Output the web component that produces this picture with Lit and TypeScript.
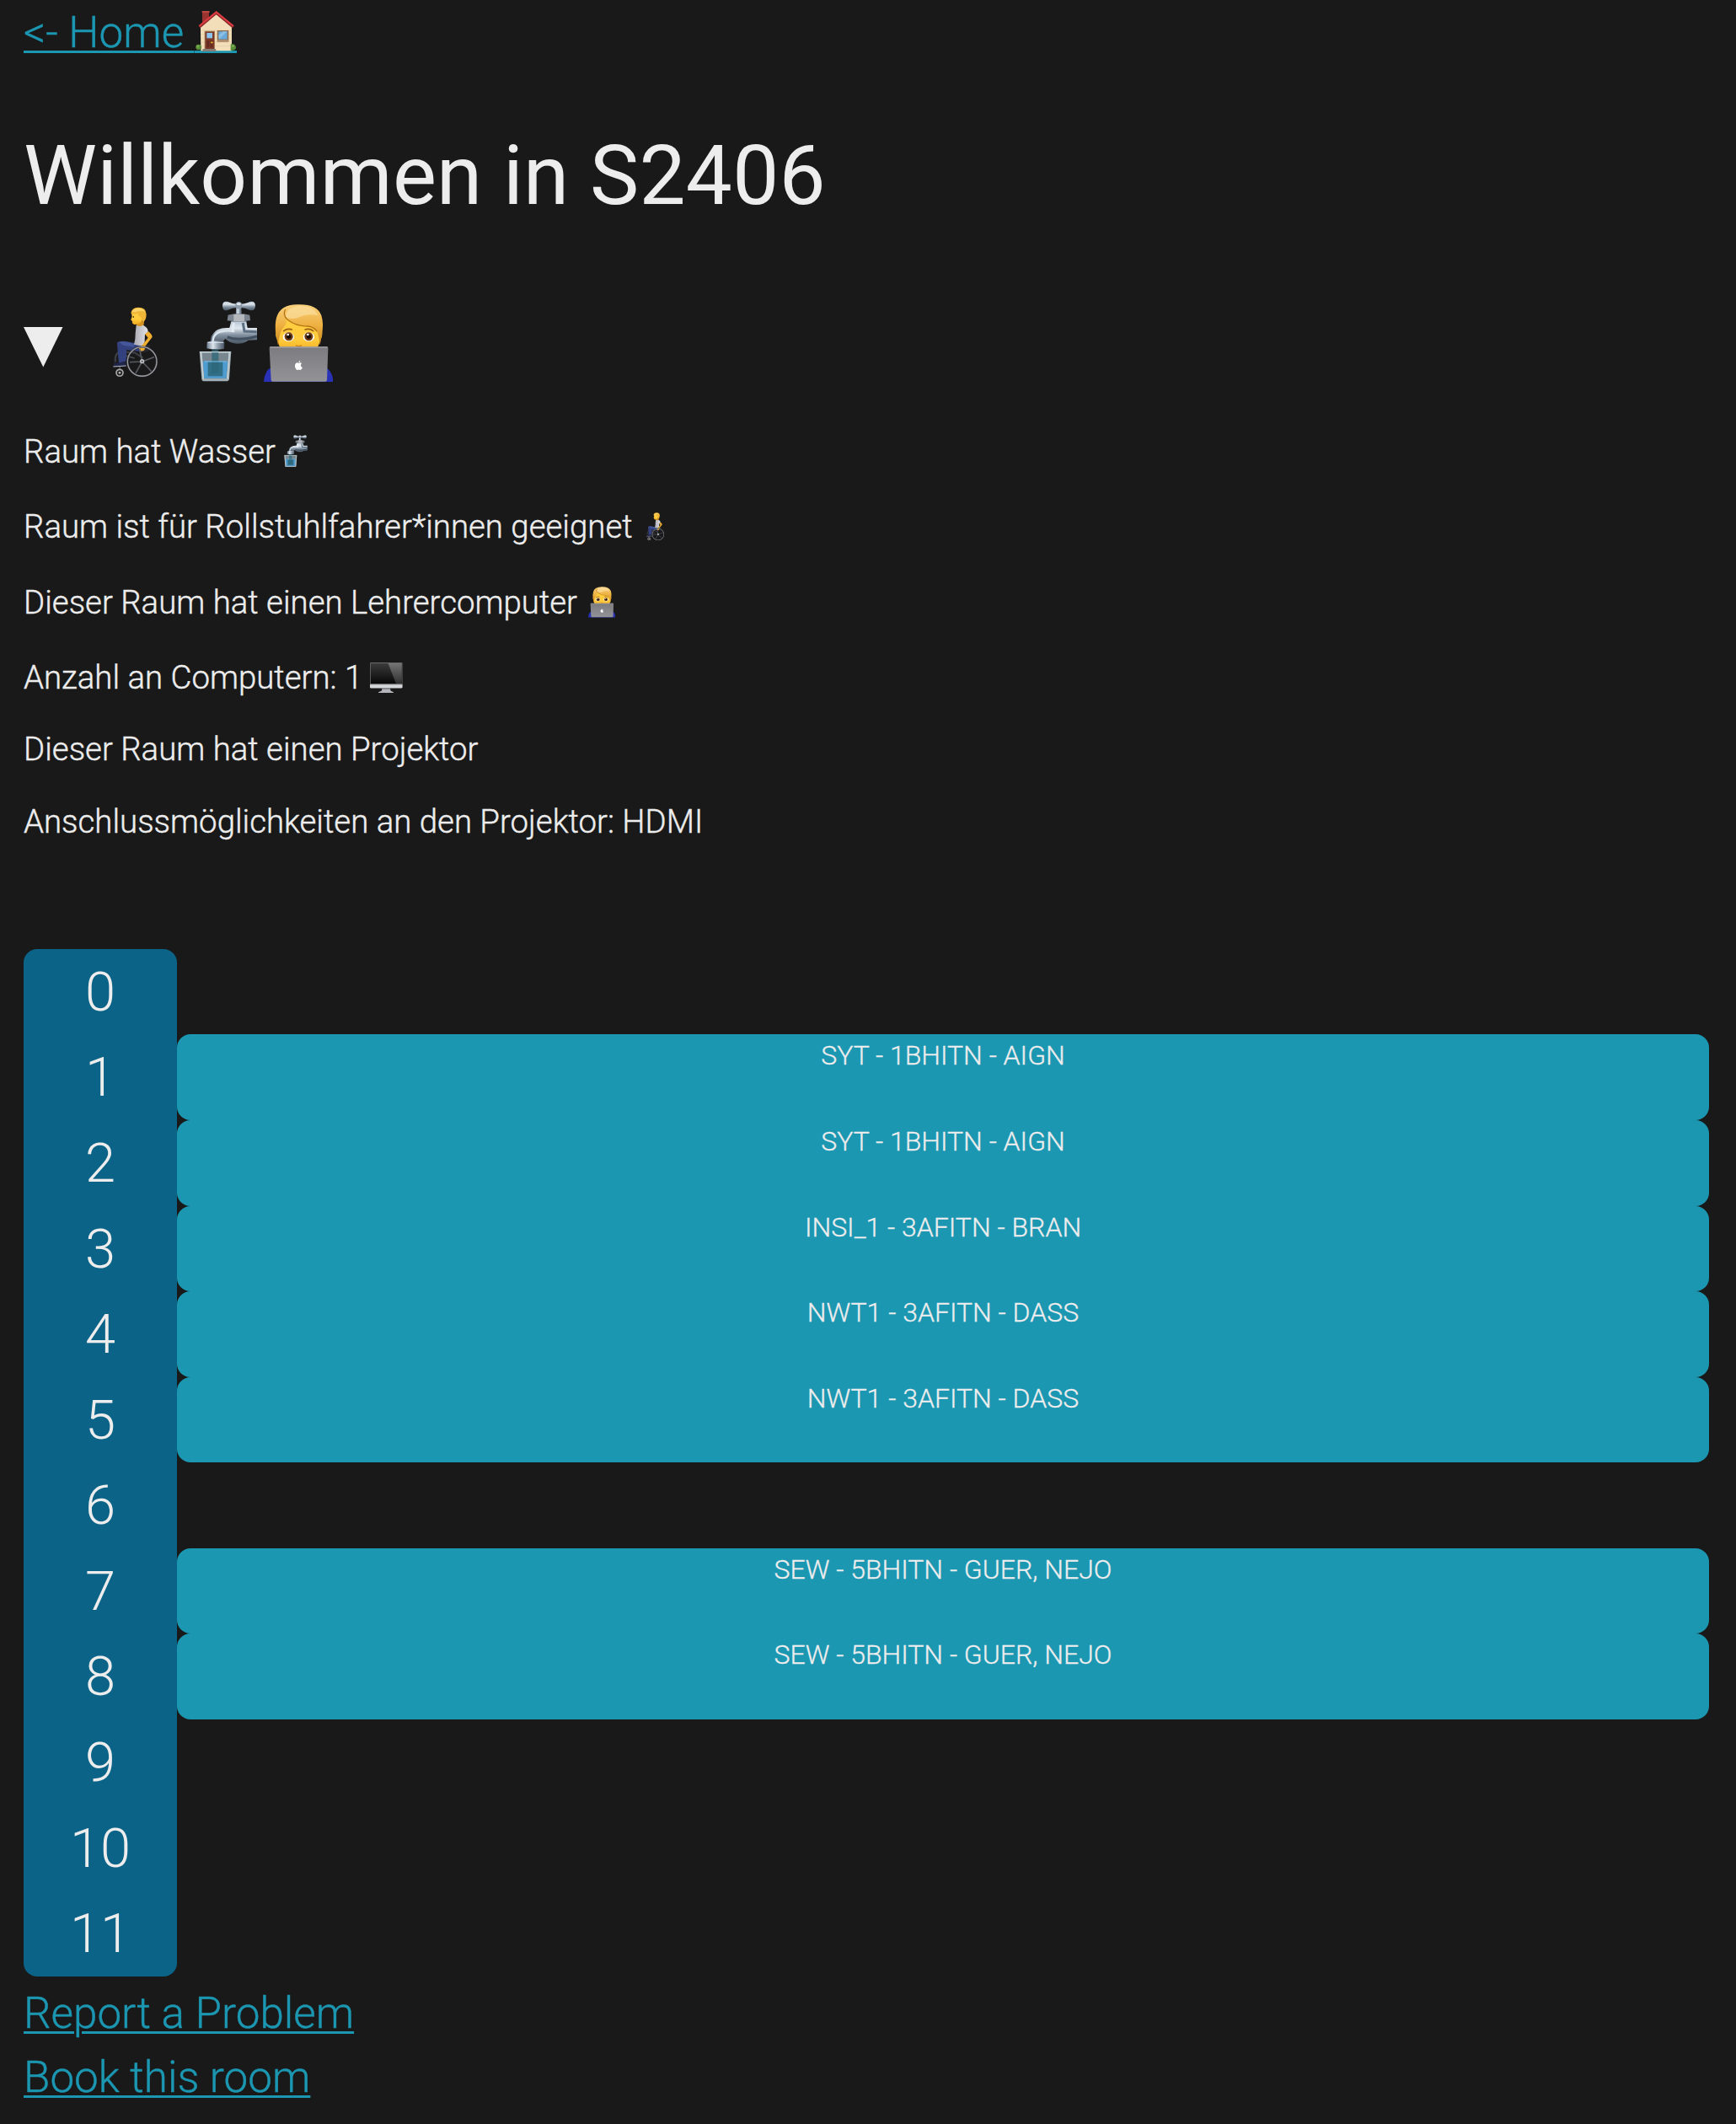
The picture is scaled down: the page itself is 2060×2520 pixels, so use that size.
import { LitElement, html, css, svg } from "lit";
import { customElement } from "lit/decorators.js";

const LESSONS: (string | null)[] = [
  null,
  "SYT - 1BHITN - AIGN",
  "SYT - 1BHITN - AIGN",
  "INSI_1 - 3AFITN - BRAN",
  "NWT1 - 3AFITN - DASS",
  "NWT1 - 3AFITN - DASS",
  null,
  "SEW - 5BHITN - GUER, NEJO",
  "SEW - 5BHITN - GUER, NEJO",
  null,
  null,
  null,
];

const gradients = svg`
  <defs>
    <linearGradient id="steel" x1="0" y1="0" x2="0" y2="1">
      <stop offset="0" stop-color="#b9c6d4"/><stop offset=".3" stop-color="#dfe7ee"/>
      <stop offset=".6" stop-color="#8190a0"/><stop offset="1" stop-color="#46525e"/>
    </linearGradient>
    <linearGradient id="steelx" x1="0" y1="0" x2="1" y2="0">
      <stop offset="0" stop-color="#68788a"/><stop offset=".35" stop-color="#dde5ed"/>
      <stop offset=".65" stop-color="#8d9baa"/><stop offset="1" stop-color="#465261"/>
    </linearGradient>
    <linearGradient id="hair" x1="0" y1="0" x2="0" y2="1">
      <stop offset="0" stop-color="#f8d07c"/><stop offset=".5" stop-color="#eeb142"/><stop offset="1" stop-color="#c88718"/>
    </linearGradient>
    <linearGradient id="skin" x1="0" y1="0" x2="0" y2="1">
      <stop offset="0" stop-color="#ffcf42"/><stop offset=".6" stop-color="#ffcb3c"/><stop offset="1" stop-color="#f0a81e"/>
    </linearGradient>
    <linearGradient id="laptop" x1="0" y1="0" x2="0" y2="1">
      <stop offset="0" stop-color="#7c7c80"/><stop offset="1" stop-color="#939397"/>
    </linearGradient>
    <linearGradient id="shirt" x1="0" y1="0" x2="1" y2="0">
      <stop offset="0" stop-color="#a9abb3"/><stop offset="1" stop-color="#e2e2e6"/>
    </linearGradient>
    <linearGradient id="screen" x1="0" y1="0" x2="0" y2="1">
      <stop offset="0" stop-color="#3b3b3b"/><stop offset="1" stop-color="#080808"/>
    </linearGradient>
    <linearGradient id="glare" x1="0" y1="0" x2="0" y2="1">
      <stop offset="0" stop-color="#747474"/><stop offset="1" stop-color="#303030"/>
    </linearGradient>
  </defs>`;

const wheelchair = (cls: string) => html`
  <svg class=${cls} viewBox="403 103 160 250" aria-hidden="true">
    ${gradients}
    <path d="M505 240 L536 238 L530 262 L500 268 Z" fill="#25272c"/>
    <path d="M412 300 Q408 264 434 263 L480 266 L510 285" fill="none" stroke="#3b3e44" stroke-width="7"/>
    <path d="M428 330 L426 292 Q428 274 444 276 L480 286" fill="none" stroke="#4a4d54" stroke-width="5"/>
    <path d="M418 231 Q422 224 450 226 L484 233 L510 242 L507 262 L470 259 L452 256 L450 296 L424 304 L420 262 Z" fill="#33427f"/>
    <path d="M424 228 Q450 224 482 236 L476 246 L440 240 Z" fill="#465799"/>
    <path d="M406 305 L448 298 L450 314 L406 318 Z" fill="#20264a"/>
    <path d="M404 316 L450 313" stroke="#b9bac2" stroke-width="3"/>
    <path d="M486 168 Q504 160 516 172 Q528 178 528 192 L517 202 L516 228 L508 243 L478 237 Q484 214 483 198 Z" fill="url(#shirt)"/>
    <path d="M517 200 L530 191 Q544 204 543 211 L518 243 L516 256 Q508 264 497 259 L496 249 L508 239 L528 213 Z" fill="#efae2e"/>
    <path d="M488 154 L514 155 L513 167 Q502 176 488 170 Z" fill="#d69320"/>
    <path d="M469 120 L508 120 Q516 139 506 154 Q494 168 478 166 L471 160 L473 156 L467 149 L471 139 Z" fill="url(#skin)"/>
    <path d="M467 127 Q469 106 493 105 Q522 105 522 130 Q522 149 512 157 Q503 153 504 139 L494 135 L493 126 Q480 131 467 127 Z" fill="#efb637"/>
    <path d="M470 121 Q477 107 495 108 Q511 108 517 120 Q498 115 485 122" fill="#fad36a"/>
    <ellipse cx="476" cy="139" rx="2" ry="3" fill="#392515"/>
    <circle cx="507" cy="298" r="52" fill="none" stroke="#33353a" stroke-width="7"/>
    <circle cx="507" cy="298" r="52" fill="none" stroke="#9b9ca2" stroke-width="4"/>
    <path d="M507 298 L463 300 M507 298 L550 282 M507 298 L540 333 M507 298 L484 340 M507 298 L498 253" stroke="#55575d" stroke-width="5"/>
    <circle cx="507" cy="297" r="8" fill="#bcbdc2"/><circle cx="507" cy="297" r="3" fill="#555"/>
    <circle cx="427" cy="338" r="12" fill="#222" stroke="#aaa" stroke-width="5"/>
    <circle cx="427" cy="338" r="4" fill="#bbb"/>
  </svg>`;

const faucet = (cls: string) => html`
  <svg class=${cls} viewBox="708 82 208 288" aria-hidden="true">
    ${gradients}
    <path d="M841 100 L859 100 L861 138 L839 138 Z" fill="url(#steelx)"/>
    <path d="M848 94 Q828 94 812 85 Q792 80 792 100 Q793 121 811 115 Q830 104 850 106 Q872 105 889 115 Q908 120 909 99 Q908 80 890 85 Q872 94 848 94 Z" fill="url(#steel)"/>
    <ellipse cx="850" cy="98" rx="12" ry="13" fill="#8d9bab"/><ellipse cx="850" cy="93" rx="8" ry="5" fill="#dbe5ee"/>
    <path d="M812 132 Q850 124 889 132 L891 152 Q850 158 809 152 Z" fill="#7c858f"/>
    <path d="M832 130 H870 V154 H832 Z" fill="#b4b8bd"/>
    <path d="M823 155 H877 L881 178 L915 178 V221 L884 222 Q868 236 841 234 Q817 232 803 217 Q793 222 793 236 L749 234 Q748 198 776 184 Q793 176 817 178 Z" fill="url(#steel)"/>
    <path d="M758 224 Q760 195 792 190 Q812 186 832 190" fill="none" stroke="#dbe5ee" stroke-width="7" stroke-linecap="round"/>
    <path d="M832 160 L828 193" stroke="#e3ebf2" stroke-width="9"/>
    <path d="M865 160 L870 190 L914 192" fill="none" stroke="#5d6f82" stroke-width="9"/>
    <path d="M809 211 Q850 226 915 208" fill="none" stroke="#435060" stroke-width="9"/>
    <path d="M737 228 Q768 221 799 228 L798 252 Q767 258 736 251 Z" fill="url(#steelx)"/>
    <path d="M740 230 H796" stroke="#dbe7f2" stroke-width="3"/>
    <path d="M710 262 H823 L816 360 Q814 368 805 368 H728 Q719 368 718 360 Z" fill="#a1b0b7"/>
    <path d="M718 267 H814 L807 359 H726 Z" fill="#77868f"/>
    <path d="M722 297 H811 L806 357 H727 Z" fill="#4e9cd0"/>
    <path d="M740 299 H793 V350 H740 Z" fill="#316f87"/>
    <path d="M754 255 H778 V340 H754 Z" fill="#2c6678" opacity=".75"/>
    <path d="M716 266 L724 360 M817 266 L810 360" stroke="#c3ced2" stroke-width="5"/>
    <path d="M711 264 H822" stroke="#d5e0e3" stroke-width="3"/>
    <path d="M728 298 H807" stroke="#73c0ec" stroke-width="3"/>
  </svg>`;

const teacher = (cls: string) => html`
  <svg class=${cls} viewBox="938 92 248 278" aria-hidden="true">
    ${gradients}
    <path d="M938 369 Q940 326 970 314 L1154 314 Q1183 326 1185 369 Z" fill="#2931b7"/>
    <path d="M984 182 Q976 205 987 219 Q992 253 1020 270 H1108 Q1134 252 1138 219 Q1150 204 1144 184 L1132 140 H996 Z" fill="url(#skin)"/>
    <path d="M981 200 Q972 127 1008 105 Q1028 92 1063 93 Q1128 92 1143 132 Q1152 160 1145 200 L1138 238 Q1134 200 1125 186 Q1116 172 1094 170 Q1047 165 1015 143 Q1022 160 1012 170 Q993 188 989 238 Z" fill="url(#hair)"/>
    <path d="M1015 136 Q1021 99 1070 98 Q1118 99 1130 132 Q1095 122 1057 141 Q1030 147 1015 136 Z" fill="#fbdc9b" opacity=".75"/>
    <path d="M1015 110 Q1004 128 1022 147 Q1056 172 1094 170 Q1116 172 1127 188" fill="none" stroke="#b67417" stroke-width="4"/>
    <path d="M1009 187 Q1022 177 1038 182 M1085 182 Q1102 177 1114 187" fill="none" stroke="#9b5f16" stroke-width="5" stroke-linecap="round"/>
    <ellipse cx="1026" cy="208" rx="20" ry="16" fill="#fff"/><ellipse cx="1098" cy="208" rx="20" ry="16" fill="#fff"/>
    <circle cx="1027" cy="207" r="15" fill="#6e3b17"/><circle cx="1098" cy="207" r="15" fill="#6e3b17"/>
    <circle cx="1027" cy="207" r="8" fill="#160d08"/><circle cx="1098" cy="207" r="8" fill="#160d08"/>
    <circle cx="1024" cy="200" r="4" fill="#fff"/><circle cx="1095" cy="200" r="4" fill="#fff"/>
    <path d="M1052 238 Q1062 245 1073 238" fill="none" stroke="#d68619" stroke-width="5"/>
    <path d="M962 243 H1163 Q1167 243 1167 248 L1163 362 Q1162 367 1157 367 H970 Q964 367 964 362 L958 249 Q958 243 962 243 Z" fill="url(#laptop)"/>
    <path d="M960 245 H1165" stroke="#b2b2b5" stroke-width="3"/>
    <path d="M1062 301 Q1067 298 1073 301 Q1067 308 1071 314 L1076 318 Q1070 329 1065 325 Q1062 323 1058 326 Q1053 327 1049 315 Q1048 301 1057 300 Z M1062 299 Q1062 293 1068 292 Q1069 298 1062 299 Z" fill="#fff"/>
  </svg>`;

const monitor = html`
  <svg class="monitor" viewBox="0 0 38.5 36.5" aria-hidden="true">
    ${gradients}
    <rect width="38.5" height="29" rx="1.2" fill="#696969"/>
    <rect x=".8" y="1" width="36.9" height="24" fill="url(#screen)"/>
    <path d="M21.5 1 H37.7 V25 H31 Z" fill="url(#glare)"/>
    <path d="M0 26.3 H38.5 V29.3 Q38.5 30.5 37 30.5 H1.5 Q0 30.5 0 29.3 Z" fill="#d5d6da"/>
    <path d="M14.5 30.5 H24 L24.5 33.5 L28 35.2 V36.5 H10 V35.2 L14 33.5 Z" fill="#b5b6bb"/>
    <path d="M14.5 31.2 H24" stroke="#737479" stroke-width="1"/>
  </svg>`;

const house = html`
  <svg class="house" viewBox="692 36 151 153" aria-hidden="true">
    <rect x="692" y="180" width="151" height="9" fill="#1c97b2"/>
    <path d="M719 42 H743 V64 L719 82 Z" fill="#9b3430"/><path d="M718 39 H745 V45 H718 Z" fill="#b84840"/>
    <path d="M713 94 L769 50 L824 94 V181 H714 Z" fill="#f2dfba"/>
    <path d="M716 108 H823 M716 122 H823 M716 136 H823 M716 150 H823 M716 164 H823" stroke="#e5cda5" stroke-width="2"/>
    <path d="M709 96 L769 46 L829 96" fill="none" stroke="#8d2a2b" stroke-width="9"/>
    <path d="M708 93 L769 43 L830 93" fill="none" stroke="#df3d42" stroke-width="6"/>
    <rect x="727" y="110" width="37" height="66" fill="#a07b5b"/><rect x="730" y="113" width="31" height="62" fill="#7c3928"/>
    <rect x="735" y="117" width="20" height="19" fill="#8bc5ed"/><path d="M736 144 H744 V169 H736 Z M748 144 H756 V169 H748 Z" fill="#642b20"/>
    <circle cx="753" cy="151" r="3.5" fill="#e5aa38"/>
    <rect x="772" y="108" width="41" height="41" fill="#8e6d4f"/><rect x="777" y="112" width="31" height="28" fill="#68a9d9"/>
    <path d="M777 126 L792 112 H808 L779 140 Z" fill="#8abee4"/>
    <path d="M773 145 H813" stroke="#b99572" stroke-width="5"/>
    <path d="M721 174 H767 L769 183 H719 Z" fill="#888078"/>
    <circle cx="706" cy="168" r="10" fill="#578c38"/><circle cx="703" cy="165" r="5" fill="#75a94c"/>
    <path d="M820 157 Q839 154 839 171 Q838 180 820 180 Z" fill="#578c38"/><circle cx="828" cy="164" r="5" fill="#75a94c"/>
  </svg>`;

@customElement("app-root")
export class AppRoot extends LitElement {
  static styles = css`
    :host {
      display: block;
      box-sizing: border-box;
      height: 2520px;
      padding: 0 32px 0 28px;
      background: #191919;
      color: #ededed;
      font-family: Roboto, sans-serif;
      font-weight: 300;
      overflow: hidden;
    }
    svg { display: block; flex: none; }
    .link {
      display: flex;
      width: max-content;
      height: 76px;
      font-size: 51.2px;
      line-height: 78px;
      color: #1c97b2;
      -webkit-text-stroke: 0.4px currentColor;
      text-decoration: underline;
      text-decoration-thickness: 3px;
      text-underline-offset: 4px;
    }
    .link span { white-space: pre; }
    .house { width: 50.33px; height: 51px; margin-top: 12px; }
    h1 {
      margin: 63px 0 0;
      font-size: 98px;
      line-height: 140px;
      font-weight: 370;
      letter-spacing: 0.25px;
    }
    .features { display: flex; align-items: flex-start; height: 150px; padding-top: 76px; }
    .marker { width: 46.5px; height: 47.5px; margin-top: 33px; }
    .wheelchair { width: 53.3px; height: 83.3px; margin: 9.3px 0 0 59.8px; }
    .faucet { width: 69.3px; height: 96px; margin: 2.3px 0 0 48.4px; }
    .teacher { width: 82.7px; height: 92.7px; margin: 5.7px 0 0 7.3px; }
    .facts { height: 620.8px; font-size: 38.4px; line-height: 62px; -webkit-text-stroke: 0.4px currentColor; }
    .fact { display: flex; align-items: flex-start; height: 89.3px; margin: 0; white-space: pre; }
    .fact.plain { height: 85.6px; }
    .faucet-s { width: 27.8px; height: 38.5px; margin: 10.7px 0 0 10px; }
    .wheelchair-s { width: 21.4px; height: 33.4px; margin: 13.6px 0 0 16px; }
    .teacher-s { width: 32.6px; height: 36.6px; margin: 12.8px 0 0 12.5px; }
    .monitor { width: 38.5px; height: 36.5px; margin: 12.9px 0 0 9px; }
    .timetable { display: grid; grid-template-columns: 182px 1fr; height: 1219px; }
    .hours { display: grid; grid-template-rows: repeat(12, 1fr); border-radius: 16px; background: #0b6387; }
    .hour { font-size: 65px; line-height: 102px; height: 101.58px; text-align: center; }
    .lessons { display: grid; grid-template-rows: repeat(12, 1fr); }
    .lesson {
      border-radius: 16px;
      background: #1c97b2;
      text-align: center;
      font-size: 32px;
      line-height: 50px;
      -webkit-text-stroke: 0.3px currentColor;
    }
    .links { padding-top: 5px; }
  `;

  render() {
    return html`
      <a class="link"><span>&lt;- Home </span>${house}</a>
      <h1><span>Willkommen in S2406</span></h1>
      <div class="features">
        <svg class="marker" viewBox="0 0 46.5 47.5" aria-hidden="true"><path d="M0 0 H46.5 L23.3 47.5 Z" fill="#ededed"/></svg>
        ${wheelchair("wheelchair")} ${faucet("faucet")} ${teacher("teacher")}
      </div>
      <div class="facts">
        <p class="fact"><span>Raum hat Wasser</span>${faucet("faucet-s")}</p>
        <p class="fact"><span>Raum ist für Rollstuhlfahrer*innen geeignet</span>${wheelchair("wheelchair-s")}</p>
        <p class="fact"><span>Dieser Raum hat einen Lehrercomputer</span>${teacher("teacher-s")}</p>
        <p class="fact plain"><span>Anzahl an Computern: 1</span>${monitor}</p>
        <p class="fact plain"><span>Dieser Raum hat einen Projektor</span></p>
        <p class="fact plain"><span>Anschlussmöglichkeiten an den Projektor: HDMI</span></p>
      </div>
      <div class="timetable">
        <div class="hours">${LESSONS.map((_, i) => html`<div class="hour">${i}</div>`)}</div>
        <div class="lessons">${LESSONS.map((l) => (l ? html`<div class="lesson">${l}</div>` : html`<div></div>`))}</div>
      </div>
      <div class="links">
        <a class="link">Report a Problem</a>
        <a class="link">Book this room</a>
      </div>
    `;
  }
}
